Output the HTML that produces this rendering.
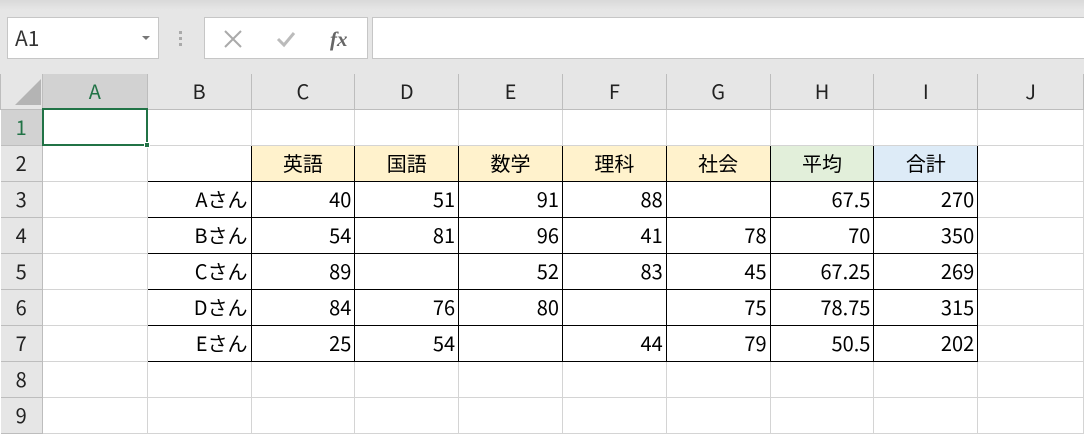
<!DOCTYPE html>
<html><head><meta charset="utf-8"><style>
*{margin:0;padding:0;box-sizing:border-box}
body{width:1084px;height:434px;overflow:hidden;background:#e6e6e6;font-family:"Noto Sans CJK JP","Liberation Sans",sans-serif;position:relative}
.top{position:absolute;left:0;top:0;width:1084px;height:74px;background:linear-gradient(#d9d9d9,#e6e6e6 10px)}
.box{position:absolute;background:#fff;border:1px solid #c6c6c6;top:17px;height:42px}
table{position:absolute;left:0;top:74px;border-collapse:collapse;table-layout:fixed;background:#fff}
td{border:1px solid #d4d4d4;height:36px;font-size:20px;line-height:20px;color:#000;padding:0 3px;white-space:nowrap;overflow:hidden;text-align:right}
tr.h td{height:35px;background:#e6e6e6;border-color:#bdbdbd;text-align:center;color:#222;border-top:none}
td.rh{background:#e6e6e6;border-color:#bdbdbd;text-align:center;color:#222;border-left:none}
tr.h td.sel,td.rh.sel{background:#d2d2d2;color:#217346}
td.k{border:1px solid #000}
td.y{background:#fff2cc;text-align:center}
td.g{background:#e2efda;text-align:center}
td.b{background:#ddebf7;text-align:center}
.cur{position:absolute;left:42px;top:108px;width:106px;height:38px;border:2px solid #217346}
.dot{position:absolute;left:144px;top:142px;width:6px;height:6px;background:#217346;border:1px solid #fff}
</style></head><body>
<div class="top"></div>
<div class="box" style="left:7px;width:152px"><span style="position:absolute;left:7px;top:7px;font-size:21px;line-height:26px;color:#333">A1</span><span style="position:absolute;right:8px;top:18px;border:4px solid transparent;border-top:4px solid #777"></span></div>
<div style="position:absolute;left:179px;top:31px;width:3px;height:16px;background:repeating-linear-gradient(#aaa 0 3px,transparent 3px 6px)"></div>
<div class="box" style="left:204px;width:164px">
<svg width="164" height="42" style="position:absolute;left:0;top:0"><path d="M20 13l16 16M36 13L20 29" stroke="#aaa" stroke-width="2" fill="none"/><path d="M73 21l6 6 10-12" stroke="#bbb" stroke-width="3" fill="none"/><text x="125" y="28" font-family="Liberation Serif" font-style="italic" font-weight="bold" font-size="21" fill="#666">fx</text></svg></div>
<div class="box" style="left:372px;width:720px"></div>
<table>
<colgroup><col style="width:42px"><col style="width:105px"><col style="width:104px"><col style="width:104px"><col style="width:104px"><col style="width:104px"><col style="width:104px"><col style="width:104px"><col style="width:104px"><col style="width:104px"><col style="width:106px"></colgroup>
<tr class="h"><td style="position:relative"><svg width="40" height="34" style="position:absolute;left:2px;top:0"><path d="M12 31L38 5V31Z" fill="#b4b4b4"/></svg></td><td class="sel">A</td><td>B</td><td>C</td><td>D</td><td>E</td><td>F</td><td>G</td><td>H</td><td>I</td><td>J</td></tr>
<tr><td class="rh sel">1</td><td></td><td></td><td></td><td></td><td></td><td></td><td></td><td></td><td></td><td></td></tr>
<tr><td class="rh">2</td><td></td><td class="k"></td><td class="k y">英語</td><td class="k y">国語</td><td class="k y">数学</td><td class="k y">理科</td><td class="k y">社会</td><td class="k g">平均</td><td class="k b">合計</td><td></td></tr>
<tr><td class="rh">3</td><td></td><td class="k">Aさん</td><td class="k">40</td><td class="k">51</td><td class="k">91</td><td class="k">88</td><td class="k"></td><td class="k">67.5</td><td class="k">270</td><td></td></tr>
<tr><td class="rh">4</td><td></td><td class="k">Bさん</td><td class="k">54</td><td class="k">81</td><td class="k">96</td><td class="k">41</td><td class="k">78</td><td class="k">70</td><td class="k">350</td><td></td></tr>
<tr><td class="rh">5</td><td></td><td class="k">Cさん</td><td class="k">89</td><td class="k"></td><td class="k">52</td><td class="k">83</td><td class="k">45</td><td class="k">67.25</td><td class="k">269</td><td></td></tr>
<tr><td class="rh">6</td><td></td><td class="k">Dさん</td><td class="k">84</td><td class="k">76</td><td class="k">80</td><td class="k"></td><td class="k">75</td><td class="k">78.75</td><td class="k">315</td><td></td></tr>
<tr><td class="rh">7</td><td></td><td class="k">Eさん</td><td class="k">25</td><td class="k">54</td><td class="k"></td><td class="k">44</td><td class="k">79</td><td class="k">50.5</td><td class="k">202</td><td></td></tr>
<tr><td class="rh">8</td><td></td><td></td><td></td><td></td><td></td><td></td><td></td><td></td><td></td><td></td></tr>
<tr><td class="rh">9</td><td></td><td></td><td></td><td></td><td></td><td></td><td></td><td></td><td></td><td></td></tr>
</table>
<div class="cur"></div><div class="dot"></div>
</body></html>
